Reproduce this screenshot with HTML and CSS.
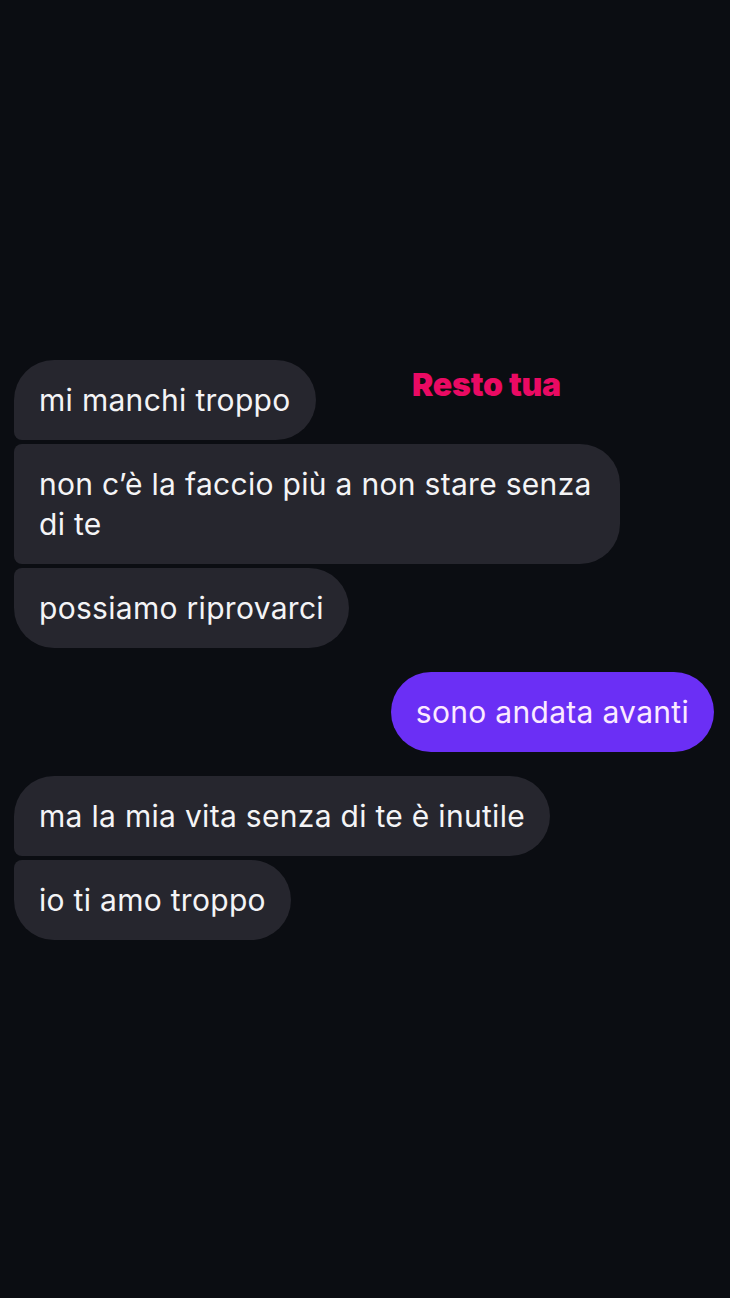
FILE: index.html
```html
<!DOCTYPE html>
<html>
<head>
  <title>Chat</title>
  <link rel="stylesheet" href="styles.css">
</head>
<body>
  <div class="chat">
    <span class="sticker">Resto tua</span>

    <div class="group received">
      <div class="bubble first">mi manchi troppo</div>
      <div class="bubble">non c’è la faccio più a non stare senza di te</div>
      <div class="bubble last">possiamo riprovarci</div>
    </div>

    <div class="group sent">
      <div class="bubble single">sono andata avanti</div>
    </div>

    <div class="group received">
      <div class="bubble first">ma la mia vita senza di te è inutile</div>
      <div class="bubble last">io ti amo troppo</div>
    </div>
  </div>
</body>
</html>
```

FILE: styles.css
```css
body {
  margin: 0;
  padding: 0;
  background-color: #0b0d12;
  font-family: Inter, "Noto Sans", sans-serif;
}
.chat {
  position: relative;
  min-height: 1298px;
  box-sizing: border-box;
  padding: 360px 14px 0 14px;
  display: flex;
  flex-direction: column;
  gap: 24px;
}
.sticker {
  position: absolute;
  left: 412px;
  top: 366px;
  font-size: 32px;
  line-height: 38px;
  font-weight: 900;
  letter-spacing: -0.2px;
  color: #ea0a63;
}
.group {
  display: flex;
  flex-direction: column;
  gap: 4px;
}
.received {
  align-items: flex-start;
}
.sent {
  align-items: flex-end;
  padding-right: 2px;
}
.bubble {
  box-sizing: border-box;
  max-width: 606px;
  padding: 20px 25px;
  font-size: 30px;
  line-height: 40px;
  letter-spacing: 0.3px;
  color: #f4f4f6;
  background-color: #26262e;
  border-radius: 8px 40px 40px 8px;
}
.bubble.first {
  border-radius: 40px 40px 40px 8px;
}
.bubble.last {
  border-radius: 8px 40px 40px 40px;
}
.sent .bubble {
  background-color: #6b2ff5;
  color: #fbeaff;
}
.bubble.single {
  border-radius: 40px;
}
```
